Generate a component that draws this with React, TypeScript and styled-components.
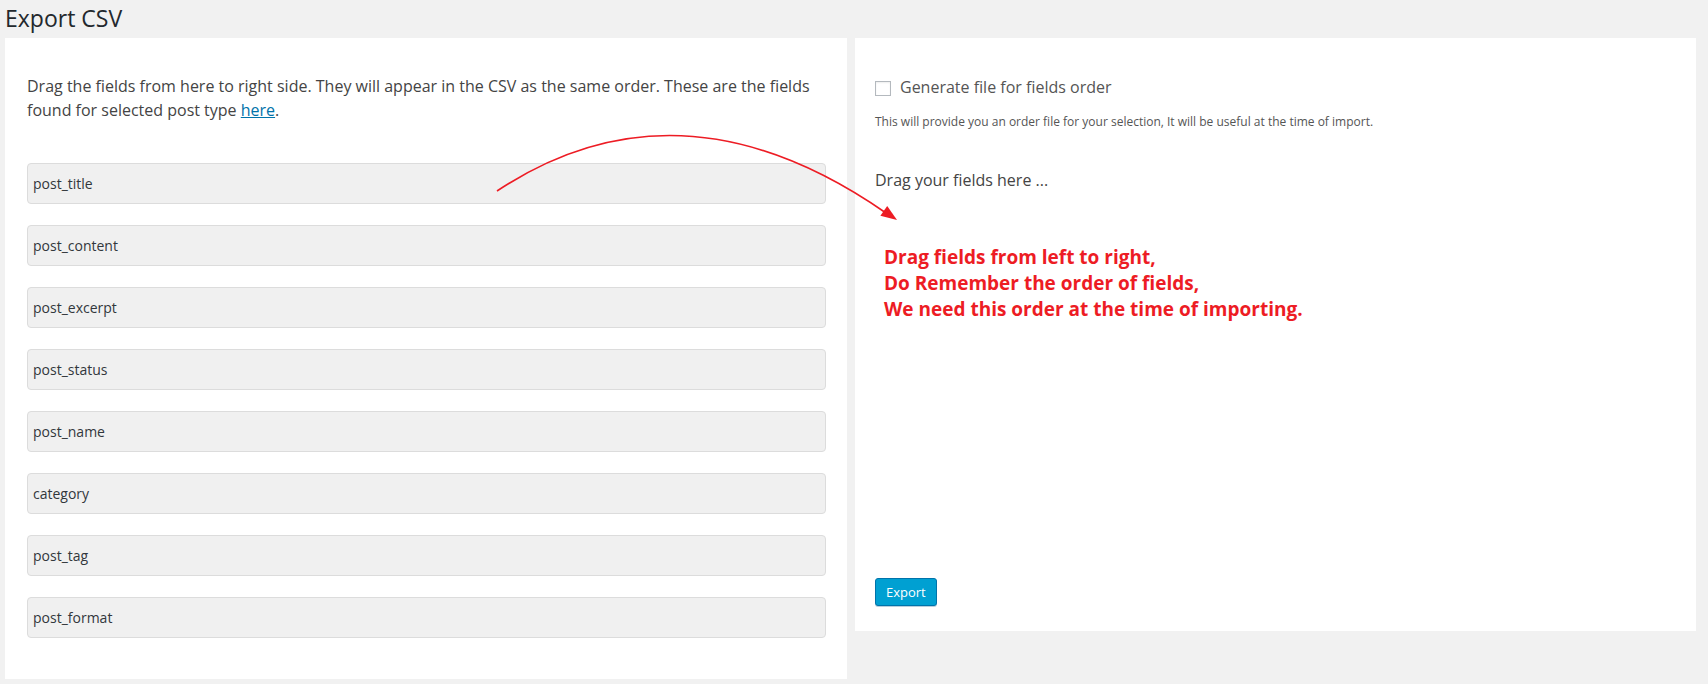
import React from "react";
import styled, { createGlobalStyle } from "styled-components";

const Global = createGlobalStyle`
  html, body { margin: 0; padding: 0; background: #f1f1f1; }
  body { font-family: "Open Sans", "Liberation Sans", sans-serif; color: #444; }
  * { box-sizing: border-box; }
`;

const Page = styled.div`
  position: relative;
  width: 1708px;
  height: 684px;
  overflow: hidden;
  background: #f1f1f1;
`;

const Title = styled.h1`
  margin: 0;
  padding: 4px 0 0 5px;
  height: 38px;
  font-size: 23px;
  font-weight: 400;
  line-height: 29px;
  color: #23282d;
`;

const Columns = styled.div`
  display: grid;
  grid-template-columns: 842px 841px;
  column-gap: 8px;
  padding-left: 5px;
  align-items: start;
`;

const Panel = styled.div<{ $h: number }>`
  background: #fff;
  height: ${(p) => p.$h}px;
  display: flex;
  flex-direction: column;
`;

const LeftPanel = styled(Panel)`
  padding: 36px 21px 0 22px;
`;

const RightPanel = styled(Panel)`
  padding: 43px 20px 0 20px;
`;

const Intro = styled.p`
  margin: 0 0 41px;
  font-size: 16px;
  line-height: 24px;
  color: #444;
`;

const Link = styled.a`
  color: #0073aa;
  text-decoration: underline;
`;

const FieldList = styled.div`
  display: flex;
  flex-direction: column;
  gap: 21px;
`;

const Field = styled.div`
  height: 41px;
  background: #f0f0f0;
  border: 1px solid #dcdcdc;
  border-radius: 4px;
  display: flex;
  align-items: center;
  padding-left: 5px;
  font-size: 14px;
  line-height: 20px;
  color: #32373c;
`;

const CheckRow = styled.label`
  display: flex;
  align-items: center;
  gap: 9px;
  height: 15px;
  font-size: 16px;
  color: #555;
`;

const CheckBox = styled.span`
  width: 16px;
  height: 15px;
  border: 1px solid #b4b9be;
  background: #fff;
  box-shadow: inset 0 1px 2px rgba(0, 0, 0, 0.07);
  flex: none;
`;

const CheckText = styled.span`
  line-height: 20px;
  margin-top: -4px;
`;

const Hint = styled.p`
  margin: 18px 0 0;
  font-size: 12px;
  line-height: 16px;
  color: #555;
`;

const DropLabel = styled.p`
  margin: 38px 0 0;
  font-size: 16px;
  line-height: 24px;
  color: #444;
`;

const Note = styled.p`
  margin: 52px 0 0 9px;
  font-size: 19px;
  font-weight: 700;
  line-height: 26px;
  color: #ed1c24;
`;

const ExportButton = styled.button`
  margin-top: auto;
  margin-bottom: 25px;
  align-self: flex-start;
  height: 28px;
  padding: 0 10px;
  background: #00a0d2;
  border: 1px solid #0073aa;
  border-radius: 3px;
  box-shadow: 0 1px 0 #b8cfdc;
  color: #fff;
  font-family: "Open Sans", "Liberation Sans", sans-serif;
  font-size: 13px;
  line-height: 26px;
`;

const Overlay = styled.svg`
  position: absolute;
  left: 0;
  top: 0;
  pointer-events: none;
`;

const fields = [
  "post_title",
  "post_content",
  "post_excerpt",
  "post_status",
  "post_name",
  "category",
  "post_tag",
  "post_format",
];

export default function App() {
  return (
    <Page>
      <Global />
      <Title>Export CSV</Title>
      <Columns>
        <LeftPanel $h={641}>
          <Intro>
            Drag the fields from here to right side. They will appear in the CSV as the same order. These are the fields
            found for selected post type <Link href="#">here</Link>.
          </Intro>
          <FieldList>
            {fields.map((f) => (
              <Field key={f}>{f}</Field>
            ))}
          </FieldList>
        </LeftPanel>
        <RightPanel $h={593}>
          <CheckRow>
            <CheckBox />
            <CheckText>Generate file for fields order</CheckText>
          </CheckRow>
          <Hint>This will provide you an order file for your selection, It will be useful at the time of import.</Hint>
          <DropLabel>Drag your fields here ...</DropLabel>
          <Note>
            Drag fields from left to right,
            <br />
            Do Remember the order of fields,
            <br />
            We need this order at the time of importing.
          </Note>
          <ExportButton>Export</ExportButton>
        </RightPanel>
      </Columns>
      <Overlay width="1708" height="684" viewBox="0 0 1708 684">
        <path d="M497 191 Q680 70 886 213" fill="none" stroke="#ed1c24" strokeWidth="1.6" />
        <polygon points="897,220 880.4,215.8 887.2,206" fill="#ed1c24" />
      </Overlay>
    </Page>
  );
}
